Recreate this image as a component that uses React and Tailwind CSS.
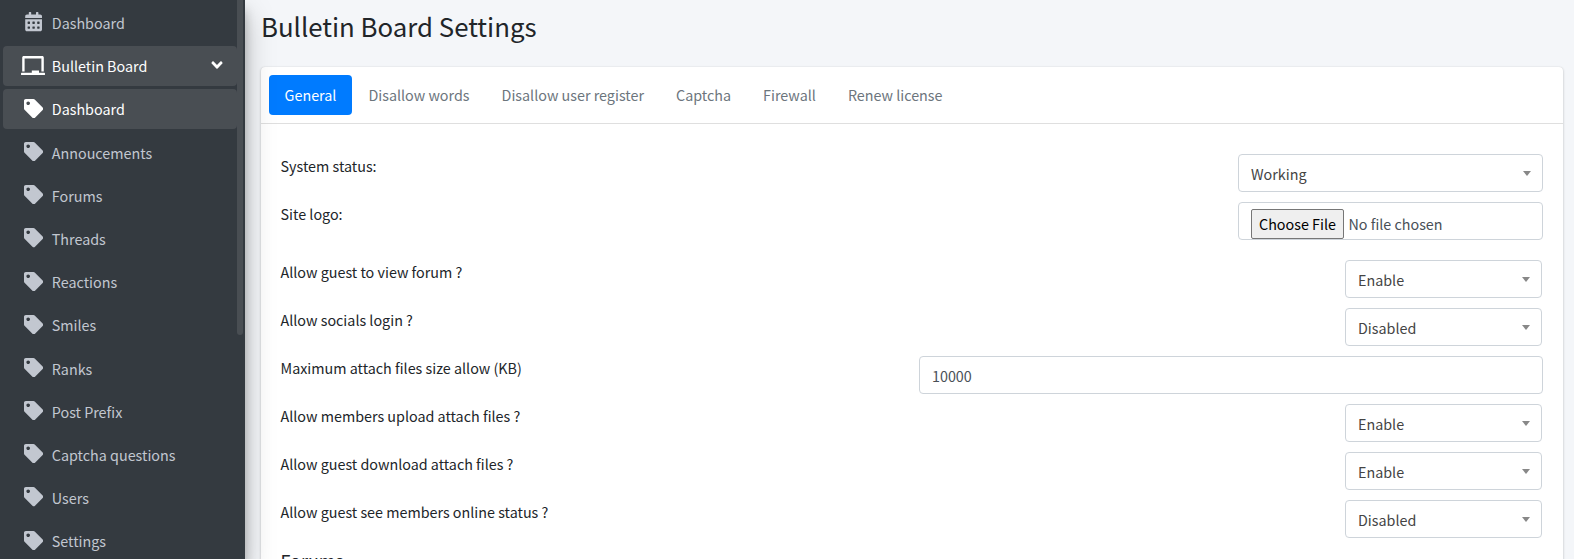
import { FaCalendarAlt, FaChalkboard, FaTag, FaAngleDown } from "react-icons/fa";

const subItems = [
  "Dashboard", "Annoucements", "Forums", "Threads", "Reactions", "Smiles",
  "Ranks", "Post Prefix", "Captcha questions", "Users", "Settings",
];

const tabs = ["General", "Disallow words", "Disallow user register", "Captcha", "Firewall", "Renew license"];

function NavItem({ icon, label, active, arrow }) {
  return (
    <li
      className={
        "mb-[3.2px] flex h-10 shrink-0 items-center rounded-[4px] pl-[16.6px] pr-[11px] " +
        (active ? "bg-[#494e53] text-white" : "text-[#c2c7d0]")
      }
    >
      <span className="flex w-[27px] shrink-0 justify-center pb-[2px]">{icon}</span>
      <span className="ml-[5.2px] grow whitespace-nowrap leading-6">{label}</span>
      {arrow}
    </li>
  );
}

function Select({ value, wide }) {
  return (
    <div
      className={
        "flex h-[38px] items-center justify-between rounded-[4px] border border-[#ced4da] pl-3 pr-[11px] " +
        (wide ? "w-[305px]" : "mr-px w-[197px]")
      }
    >
      <span className="pt-px leading-6 text-[#444]">{value}</span>
      <svg className="h-[5px] w-2" viewBox="0 0 8 5">
        <path d="M0 0h8L4 5z" fill="#888" />
      </svg>
    </div>
  );
}

function Row({ label, className = "mb-[10px]", children }) {
  return (
    <div className={"flex h-[38px] items-start justify-between " + className}>
      <label className="-ml-[0.5px] leading-6">{label}</label>
      {children}
    </div>
  );
}

export default function App() {
  return (
    <div className="flex h-[559px] w-full overflow-hidden bg-[#f4f6f9] font-['Noto_Sans_CJK_SC',sans-serif] text-[14.33px] text-[#212529]">
      <aside className="z-10 flex h-full w-[245px] shrink-0 bg-[#343a40] shadow-[0_14px_28px_rgba(0,0,0,0.25),0_10px_10px_rgba(0,0,0,0.22)]">
        <ul className="ml-[3px] flex w-[234px] flex-col overflow-hidden pt-[3px]">
          <NavItem icon={<FaCalendarAlt className="size-[19.2px]" />} label="Dashboard" />
          <NavItem
            active
            icon={<FaChalkboard className="h-[19.2px] w-6" />}
            label="Bulletin Board"
            arrow={<FaAngleDown className="-mt-[3px] size-[18px]" />}
          />
          {subItems.map((label, i) => (
            <NavItem key={label} active={i === 0} icon={<FaTag className="size-[19.2px]" />} label={label} />
          ))}
        </ul>
        <div className="h-[335px] w-[6px] rounded-b-[3px] bg-[#494e53]" />
      </aside>

      <main className="flex grow flex-col pl-4 pr-[11px]">
        <h1 className="h-[67px] shrink-0 whitespace-nowrap pt-2 text-[25.8px] leading-[35px]">Bulletin Board Settings</h1>
        <section className="h-[600px] shrink-0 rounded-[4px] bg-white shadow-[0_0_1px_rgba(0,0,0,0.125),0_1px_3px_rgba(0,0,0,0.2)]">
          <nav className="flex border-b border-[#dfdfdf] p-2">
            {tabs.map((tab, i) => (
              <a
                key={tab}
                className={
                  "flex h-10 items-center whitespace-nowrap rounded-[4px] pr-4 " +
                  (i === 0 ? "bg-[#007bff] pl-[15.6px] text-white" : "pl-4 text-[#6c757d]")
                }
              >
                {tab}
              </a>
            ))}
          </nav>
          <div className="px-5 pt-[30px]">
            <Row label="System status:"><Select value="Working" wide /></Row>
            <Row label="Site logo:" className="mb-5">
              <div className="flex h-[38px] w-[305px] items-start overflow-hidden rounded-[4px] border border-[#ced4da] pl-3 pt-[6px] text-[#495057]">
                <button className="h-[30px] w-[93px] shrink-0 whitespace-nowrap rounded-[2px] border border-[#767676] bg-[#efefef] text-black">
                  Choose File
                </button>
                <span className="ml-[4.4px] leading-[30px]">No file chosen</span>
              </div>
            </Row>
            <Row label="Allow guest to view forum ?"><Select value="Enable" /></Row>
            <Row label="Allow socials login ?"><Select value="Disabled" /></Row>
            <Row label="Maximum attach files size allow (KB)">
              <div className="flex h-[38px] w-[624px] items-center rounded-[4px] border border-[#ced4da] px-3 pt-px text-[#495057]">10000</div>
            </Row>
            <Row label="Allow members upload attach files ?"><Select value="Enable" /></Row>
            <Row label="Allow guest download attach files ?"><Select value="Enable" /></Row>
            <Row label="Allow guest see members online status ?"><Select value="Disabled" /></Row>
            <h5 className="-ml-[0.5px] text-[17.9px] leading-6">Forums</h5>
          </div>
        </section>
      </main>
    </div>
  );
}
